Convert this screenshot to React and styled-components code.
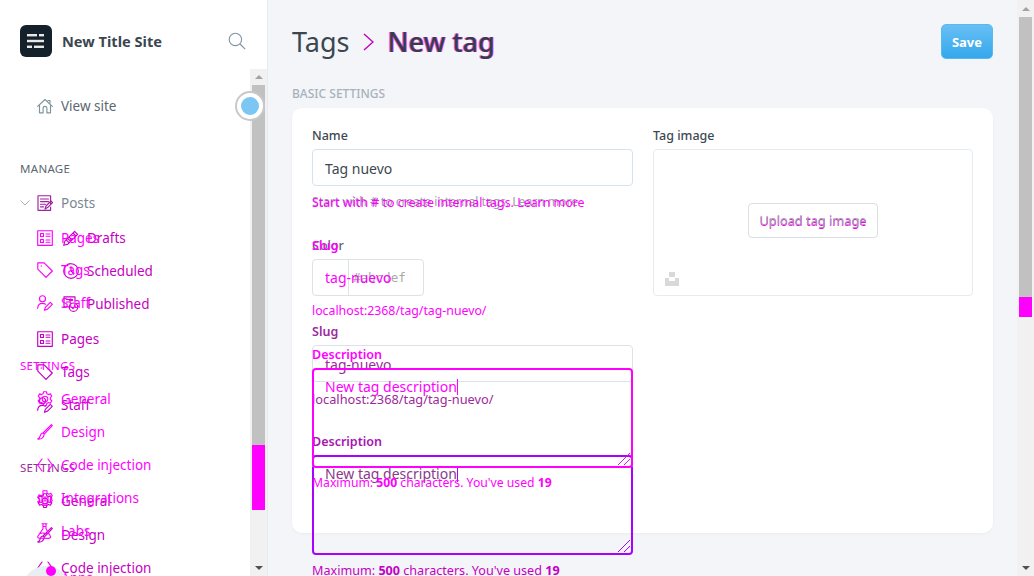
import React from "react";
import styled, { createGlobalStyle } from "styled-components";

const MAGENTA = "#ff00ff";
const MIXED = "#c400c4";
const DUSK = "#9c2a9c";
const PURPLE = "#aa00ff";

const Global = createGlobalStyle`
  html, body { margin: 0; height: 100%; overflow: hidden; }
  body { font-family: "Noto Sans", "Open Sans", sans-serif; background: #fff; }
  * { box-sizing: border-box; }
`;

const Page = styled.div`
  display: flex;
  width: 1034px;
  height: 576px;
  overflow: hidden;
`;

/* sidebar */
const Sidebar = styled.aside`
  position: relative;
  flex: 0 0 268px;
  display: flex;
  flex-direction: column;
  background: #fff;
  border-right: 1px solid #e8ebee;
  overflow: hidden;
`;
const Brand = styled.div`
  flex: 0 0 69px;
  display: flex;
  align-items: center;
  padding: 12px 21px 0 20px;
`;
const Logo = styled.div`
  width: 32px;
  height: 32px;
  border-radius: 6px;
  background: #15212a;
  display: flex;
  align-items: center;
  justify-content: center;
`;
const SiteName = styled.div`
  flex: 1;
  margin-left: 10px;
  font-size: 14.6px;
  font-weight: 700;
  color: #3b4650;
`;
const SideBody = styled.div`
  flex: 1;
  min-height: 0;
  display: flex;
`;
const Nav = styled.nav`
  position: relative;
  flex: 1;
  overflow: hidden;
  padding-top: 27px;
`;
const GhostNav = styled.div`
  position: absolute;
  top: 159px;
  left: 0;
  right: 0;
`;
const Row = styled.div`
  display: flex;
  align-items: center;
  height: 20px;
  margin-top: ${(p) => p.$gap || 0}px;
  padding-left: ${(p) => p.$indent || 37}px;
  color: ${(p) => p.$color};
  font-size: 13.5px;
  white-space: nowrap;
  svg { flex: none; }
  span { margin-left: 8px; }
`;
const Section = styled.div`
  height: 20px;
  line-height: 20px;
  margin-top: ${(p) => p.$gap || 0}px;
  padding-left: 20px;
  font-size: 11.5px;
  letter-spacing: 0.3px;
  color: ${(p) => p.$color};
`;
const Chevron = styled.svg`
  margin-right: 7px;
`;

const Scrollbar = styled.div`
  flex: 0 0 17px;
  display: flex;
  flex-direction: column;
  background: #f1f1f1;
`;
const ArrowBox = styled.div`
  flex: 0 0 ${(p) => p.$size}px;
  display: flex;
  align-items: center;
  justify-content: center;
`;
const Thumb = styled.div`
  flex: 0 0 ${(p) => p.$size}px;
  margin: 0 2px;
  background: ${(p) => p.$color};
`;
const Fill = styled.div`
  flex: 1;
`;
const UpArrow = styled.div`
  border: 4px solid transparent;
  border-top: 0;
  border-bottom: 4px solid #a3a3a3;
`;
const DownArrow = styled.div`
  border: 4px solid transparent;
  border-bottom: 0;
  border-top: 4px solid #505050;
`;

const Pulse = styled.div`
  position: absolute;
  left: 235px;
  top: 91px;
  width: 30px;
  height: 30px;
  border-radius: 50%;
  background: #fff;
  border: 2px solid #c8c8c8;
  display: flex;
  align-items: center;
  justify-content: center;
`;
const PulseDot = styled.div`
  width: 18px;
  height: 18px;
  border-radius: 50%;
  background: #7cc6f4;
`;
const Avatar = styled.div`
  position: absolute;
  left: 22px;
  top: 566px;
  width: 48px;
  height: 48px;
  border-radius: 50%;
  background: #e8eef2;
`;
const AppDot = styled.div`
  position: absolute;
  left: 46px;
  top: 566px;
  width: 10px;
  height: 10px;
  border-radius: 50%;
  background: ${MAGENTA};
`;

/* main */
const Main = styled.main`
  flex: 1;
  min-width: 0;
  display: flex;
  background: #f4f5f8;
`;
const Content = styled.div`
  flex: 1;
  min-width: 0;
  padding: 24px 24px 0 24px;
`;
const Header = styled.header`
  display: flex;
  align-items: center;
  justify-content: space-between;
  height: 35px;
`;
const Crumbs = styled.h1`
  display: flex;
  align-items: center;
  margin: 0;
  font-size: 27px;
  font-weight: 400;
  color: #3a4750;
`;
const Current = styled.span`
  margin-left: 14px;
  font-weight: 500;
  color: #333e48;
  text-shadow: 1px 0 0 rgba(255, 0, 255, 0.6), -1px 0 0 rgba(255, 0, 255, 0.6);
`;
const CrumbArrow = styled.svg`
  margin-left: 13px;
`;
const SaveButton = styled.button`
  width: 52px;
  height: 35px;
  padding: 0;
  border: 1px solid #5ab8f0;
  border-radius: 5px;
  background: linear-gradient(#68bff4, #34a8ec);
  color: #fff;
  font-family: inherit;
  font-size: 13px;
  font-weight: 700;
`;
const SectionTitle = styled.div`
  margin-top: 25px;
  height: 18px;
  line-height: 20px;
  font-size: 12px;
  font-weight: 500;
  color: #a7b2bb;
`;
const Card = styled.section`
  height: 425px;
  margin-top: 6px;
  padding: 18px 20px 0;
  display: grid;
  grid-template-columns: 321px 320px;
  column-gap: 20px;
  background: #fff;
  border-radius: 10px;
  box-shadow: 0 1px 3px rgba(0, 0, 0, 0.04);
`;
const Column = styled.div`
  position: relative;
`;
const Label = styled.div`
  height: 18px;
  line-height: 20px;
  margin-top: ${(p) => p.$gap || 0}px;
  font-size: 12.5px;
  font-weight: ${(p) => p.$weight || 500};
  color: ${(p) => p.$color || "#3d4852"};
`;
const Field = styled.div`
  height: 37px;
  margin-top: 5px;
  padding: ${(p) => p.$drop || 0}px 0 0 12px;
  display: flex;
  align-items: center;
  border: 1px solid ${(p) => p.$border || "transparent"};
  border-radius: 4px;
  font-size: 14px;
  color: ${(p) => p.$color};
`;
const Hint = styled.div`
  position: relative;
  height: 18px;
  line-height: 20px;
  margin-top: ${(p) => p.$gap}px;
  font-size: ${(p) => p.$size || 12.5}px;
  color: ${(p) => p.$color};
  white-space: nowrap;
  b { font-weight: 700; }
`;
const HintEcho = styled.div`
  position: absolute;
  top: 1px;
  left: 0;
  font-size: 12.4px;
  color: ${MAGENTA};
`;
const ColorGroup = styled.div`
  width: 112px;
  height: 37px;
  margin-top: 5px;
  display: grid;
  grid-template-columns: 36px 1fr;
  align-items: center;
  border: 1px solid #dde2e6;
  border-radius: 4px;
`;
const Swatch = styled.div`
  height: 100%;
  border-right: 1px solid #dde2e6;
`;
const ColorValue = styled.div`
  padding-left: 4px;
  font-family: "DejaVu Sans Mono", "Liberation Mono", monospace;
  font-size: 12.5px;
  color: #a8a8a8;
`;
const AreaBox = styled.div`
  position: relative;
  height: 100px;
  margin-top: 5px;
  padding: 8px 11px;
  border: 2px solid ${(p) => p.$border};
  border-radius: 4px;
  font-size: 14px;
  line-height: 18px;
  color: ${(p) => p.$color};
`;
const Caret = styled.span`
  display: inline-block;
  width: 1px;
  height: 16px;
  vertical-align: -3px;
  background: ${(p) => p.$color};
`;
const Grip = styled.svg`
  position: absolute;
  right: 0;
  bottom: 0;
`;
const SideSeam = styled.div`
  position: absolute;
  top: 331px;
  left: 0;
  right: 0;
  height: 10px;
  border-left: 2px solid #3eb0ef;
  border-right: 2px solid #3eb0ef;
`;
const GhostForm = styled.div`
  position: absolute;
  top: 110px;
  left: 0;
  right: 0;
`;
const ImageBox = styled.div`
  position: relative;
  height: 147px;
  margin-top: 5px;
  display: flex;
  align-items: center;
  justify-content: center;
  border: 1px solid #e4ecf1;
  border-radius: 4px;
`;
const UploadButton = styled.button`
  width: 130px;
  height: 35px;
  margin-top: -5px;
  padding: 0;
  border: 1px solid #d9dfe3;
  border-radius: 4px;
  background: #fff;
  font-family: inherit;
  font-size: 12.8px;
  color: #a0a0a8;
  text-shadow: 0 1px 0 ${MAGENTA};
`;
const ImageMark = styled.svg`
  position: absolute;
  left: 11px;
  bottom: 9px;
`;

/* icons */
const Svg = ({ children, color }) => (
  <svg width="16" height="16" viewBox="0 0 16 16" fill="none" stroke={color || "currentColor"} strokeWidth="1.15" strokeLinecap="round" strokeLinejoin="round">
    {children}
  </svg>
);
const icons = {
  home: <path d="M.7 8.3 8 1.5l7.3 6.8M2.5 7v7.8h3.6v-4.6a1.9 1.9 0 0 1 3.8 0v4.6h3.6V7M11 2.5h2v2.4" />,
  posts: <path d="M1 .7h12.6v8M13.6 12v3.3H1V.7M3.5 4h8M3.5 6.6h8M3.5 9.2h5M3.5 11.8h3M8 14l1-3 5-5 1.6 1.6-5 5z" />,
  pages: <path d="M.7.7h14.6v14.6H.7zM3.5 3.5h3v3h-3zM3.5 9.5h3v3h-3zM9 4h4M9 6.2h4M9 10h4M9 12.2h4" />,
  tag: <path d="M.8.8h6.3l8.2 8.2-6.3 6.3L.8 7.1zM4 4h.6" />,
  staff: <path d="M5.5.7a3 3 0 1 1 0 6 3 3 0 0 1 0-6zM.7 13.3c0-3.3 2-5 4.8-5 1.2 0 2.2.3 3 .9M7.5 15.3l.8-3 5-5 2 2-5 5z" />,
  pen: <path d="M.7 15.3l1.2-4.2L11.6 1.4l3 3-9.7 9.7zM3.2 9.8l3 3M4.6 8.4l3 3M6 7l3 3M10 3l3 3" />,
  clock: <path d="M8 .7a7.3 7.3 0 1 1 0 14.6A7.3 7.3 0 0 1 8 .7zM8 3.5V8l3 2.5" />,
  published: <path d="M1 .8h11v5M1 .8v10h5M3.5 3.5h6M3.5 6h3M10.5 7a4.2 4.2 0 1 1 0 8.4 4.2 4.2 0 0 1 0-8.4zM8.7 11.2l1.3 1.3 2.4-2.6" />,
  gear: <path d="M6.6.7h2.8l.4 2 1.7.9 1.9-.7 1.4 2.3-1.5 1.4v1.9l1.5 1.3-1.4 2.4-1.9-.7-1.7 1-.4 2H6.6l-.4-2-1.7-1-1.9.7-1.4-2.4 1.5-1.3V6.6L1.2 5.2l1.4-2.3 1.9.7 1.7-.9zM8 5.2a2.8 2.8 0 1 1 0 5.6 2.8 2.8 0 0 1 0-5.6z" />,
  brush: <path d="M15.3 1.6 14.4.7 6 9l1.2 1.2zM6 9c-2 .2-2.5 1.5-3 3.3-.2.9-1 1.9-2.3 2.7 3.5.6 6.2-1.3 6.5-4.8" />,
  code: <path d="M5 2 .7 8 5 14M11 2l4.3 6-4.3 6" />,
  plug: <path d="M6 .7h4v2.6l1.8 1 2-1 1.5 2.6-1.7 1.2v2l1.7 1.2-1.5 2.6-2-1-1.8 1v2.4H6v-2.4l-1.8-1-2 1L.7 11.8l1.7-1.2v-2L.7 7.4l1.5-2.6 2 1 1.8-1zM5 7h6v4H5zM8 7v4" />,
  flask: <path d="M5 .7h5M6 .7v5L1 13a1.5 1.5 0 0 0 1.3 2.3H12a1.5 1.5 0 0 0 1.3-2.3L9 5.7v-5M3.5 10.5c3-1.8 5 1.4 7.5 0M6 3.5h2" />,
  apps: <path d="M5 2 .7 8 5 14" />,
};

const NavRow = ({ icon, label, color, gap, indent }) => (
  <Row $color={color} $gap={gap} $indent={indent}>
    <Svg>{icons[icon]}</Svg>
    <span>{label}</span>
  </Row>
);

const baseNav = [
  { icon: "pen", label: "Drafts", gap: 15, indent: 63 },
  { icon: "clock", label: "Scheduled", gap: 13, indent: 63 },
  { icon: "published", label: "Published", gap: 13, indent: 63 },
  { icon: "pages", label: "Pages", gap: 15 },
  { icon: "tag", label: "Tags", gap: 13 },
  { icon: "staff", label: "Staff", gap: 13 },
];
const lowerNav = [
  { icon: "gear", label: "General", gap: 13 },
  { icon: "brush", label: "Design", gap: 14 },
  { icon: "code", label: "Code injection", gap: 13 },
];
const ghostTop = [
  { icon: "pages", label: "Pages" },
  { icon: "tag", label: "Tags", gap: 12 },
  { icon: "staff", label: "Staff", gap: 13 },
];
const ghostBottom = [
  { icon: "gear", label: "General", gap: 13 },
  { icon: "brush", label: "Design", gap: 13 },
  { icon: "code", label: "Code injection", gap: 13 },
  { icon: "plug", label: "Integrations", gap: 13 },
  { icon: "flask", label: "Labs", gap: 13 },
  { icon: "apps", label: "Apps", gap: 27 },
];

const Description = ({ box, text, caret }) => (
  <AreaBox $border={box} $color={text}>
    New tag description<Caret $color={caret} />
    <Grip width="14" height="14" viewBox="0 0 14 14" fill="none">
      <path d="M1 13 13 1M7 13l6-6" stroke={box} />
    </Grip>
  </AreaBox>
);

const Counter = ({ color, gap, size }) => (
  <Hint $color={color} $gap={gap} $size={size}>
    Maximum: <b>500</b> characters. You've used <b>19</b>
  </Hint>
);

export default function App() {
  return (
    <Page>
      <Global />
      <Sidebar>
        <Brand>
          <Logo>
            <svg width="18" height="16" viewBox="0 0 18 16" fill="#e8e8e8">
              <rect x="0" y="1" width="10" height="2.4" />
              <rect x="12" y="1" width="5" height="2.4" />
              <rect x="0" y="6.8" width="17" height="2.4" />
              <rect x="0" y="12.6" width="5" height="2.4" />
              <rect x="7" y="12.6" width="10" height="2.4" />
            </svg>
          </Logo>
          <SiteName>New Title Site</SiteName>
          <svg width="18" height="18" viewBox="0 0 18 18" fill="none" stroke="#7d949f" strokeWidth="1.1">
            <circle cx="7.4" cy="7.4" r="6.2" />
            <path d="M12 12l5.2 5.2" />
          </svg>
        </Brand>
        <SideBody>
          <Nav>
            <Row $color="#5c6770">
              <Svg color="#7d949f">{icons.home}</Svg>
              <span>View site</span>
            </Row>
            <Section $gap={43} $color="#5c6770">MANAGE</Section>
            <Row $color="#7b8791" $gap={14} $indent={20}>
              <Chevron width="10" height="6" viewBox="0 0 10 6" fill="none" stroke="#a9b3ba">
                <path d="M.5.5 5 5 9.5.5" />
              </Chevron>
              <Svg color="#a020a0">{icons.posts}</Svg>
              <span>Posts</span>
            </Row>
            {baseNav.map((item) => (
              <NavRow key={item.label} {...item} color={MIXED} />
            ))}
            <Section $gap={43} $color={DUSK}>SETTINGS</Section>
            {lowerNav.map((item) => (
              <NavRow key={item.label} {...item} color={MIXED} />
            ))}
            <GhostNav>
              {ghostTop.map((item) => (
                <NavRow key={item.label} {...item} color={MAGENTA} />
              ))}
              <Section $gap={43} $color={MAGENTA}>SETTINGS</Section>
              {ghostBottom.map((item) => (
                <NavRow key={item.label} {...item} color={MAGENTA} />
              ))}
            </GhostNav>
          </Nav>
          <Scrollbar>
            <ArrowBox $size={16}><UpArrow /></ArrowBox>
            <Thumb $size={360} $color="#c1c1c1" />
            <Thumb $size={65} $color={MAGENTA} />
            <Fill />
            <ArrowBox $size={16}><DownArrow /></ArrowBox>
          </Scrollbar>
        </SideBody>
        <Pulse><PulseDot /></Pulse>
        <Avatar />
        <AppDot />
      </Sidebar>
      <Main>
        <Content>
          <Header>
            <Crumbs>
              Tags
              <CrumbArrow width="11" height="18" viewBox="0 0 11 18" fill="none" stroke={MIXED} strokeWidth="1.4">
                <path d="M1 1l9 8-9 8" />
              </CrumbArrow>
              <Current>New tag</Current>
            </Crumbs>
            <SaveButton>Save</SaveButton>
          </Header>
          <SectionTitle>BASIC SETTINGS</SectionTitle>
          <Card>
            <Column>
              <Label>Name</Label>
              <Field $border="#d5e3ec" $color="#3d4852" $drop={2}>Tag nuevo</Field>
              <Hint $color="#a09aa5" $gap={6} $size={12.1}>
                Start with # to create internal tags. Learn more
                <HintEcho>Start with # to create internal tags. Learn more</HintEcho>
              </Hint>
              <Label $gap={26} $color="#5b6670">Color</Label>
              <ColorGroup>
                <Swatch />
                <ColorValue>#abcdef</ColorValue>
              </ColorGroup>
              <Label $gap={26} $color={DUSK} $weight={600}>Slug</Label>
              <Field $border="#dde2e6" $color={DUSK} $drop={2}>tag-nuevo</Field>
              <Hint $color={DUSK} $gap={7} $size={12.8}>localhost:2368/tag/tag-nuevo/</Hint>
              <Label $gap={25} $color="#a815b0" $weight={600}>Description</Label>
              <Description box={PURPLE} text="#8a3a8a" caret={PURPLE} />
              <Counter color={MIXED} gap={6} size={12.6} />
              <SideSeam />
              <GhostForm>
                <Label $color={MAGENTA} $weight={600}>Slug</Label>
                <Field $color={MAGENTA}>tag-nuevo</Field>
                <Hint $color={MAGENTA} $gap={5} $size={12.3}>localhost:2368/tag/tag-nuevo/</Hint>
                <Label $gap={26} $color={MAGENTA} $weight={600}>Description</Label>
                <Description box={MAGENTA} text={MAGENTA} caret={MAGENTA} />
                <Counter color={MAGENTA} gap={5} size={12.2} />
              </GhostForm>
            </Column>
            <Column>
              <Label>Tag image</Label>
              <ImageBox>
                <UploadButton>Upload tag image</UploadButton>
                <ImageMark width="14" height="14" viewBox="0 0 14 14" fill="#d9d9d9">
                  <path d="M4 0h6v5H4zM0 6h4v3h6V6h4v8H0z" />
                </ImageMark>
              </ImageBox>
            </Column>
          </Card>
        </Content>
        <Scrollbar>
          <ArrowBox $size={17}><UpArrow /></ArrowBox>
          <Thumb $size={280} $color="#c1c1c1" />
          <Thumb $size={20} $color={MAGENTA} />
          <Fill />
          <ArrowBox $size={16}><DownArrow /></ArrowBox>
        </Scrollbar>
      </Main>
    </Page>
  );
}
